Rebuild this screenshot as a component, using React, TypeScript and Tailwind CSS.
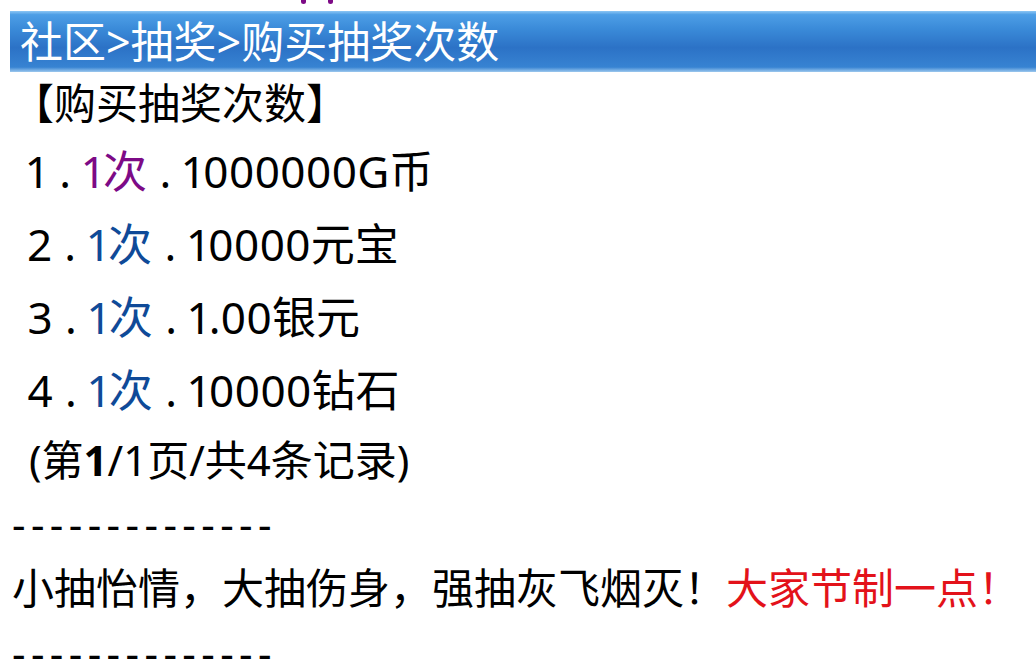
export default function App() {
  const items = [
    { n: '1', color: 'text-[#7d0a86]', prize: '1000000G币' },
    { n: '2', color: 'text-[#0f4a98]', prize: '10000元宝' },
    { n: '3', color: 'text-[#0f4a98]', prize: '1.00银元' },
    { n: '4', color: 'text-[#0f4a98]', prize: '10000钻石' },
  ]

  return (
    <div
      className="w-[1036px] h-[660px] overflow-hidden bg-white text-black text-[42px] leading-none"
      style={{ fontFamily: '"Noto Sans", "Noto Sans CJK SC", sans-serif' }}
    >
      {/* bottoms of the cut-off line above the header */}
      <div className="h-[11px] relative">
        <span className="absolute left-[301px] top-0 w-[5px] h-[4px] rounded-b-full bg-[#7d0a86]" />
        <span className="absolute left-[328px] top-0 w-[5px] h-[4px] rounded-b-full bg-[#7d0a86]" />
      </div>

      <div className="ml-[10px] h-[61px] flex items-center pl-[10px] text-[43px] text-white bg-[linear-gradient(to_bottom,#8cc6f4_0%,#4d9ee6_6%,#3a8ad8_30%,#2c72c6_60%,#3783d2_92%,#9cc8ee_100%)]">
        社区&gt;抽奖&gt;购买抽奖次数
      </div>

      <div className="pl-[12px]">
        <div className="h-[62px] flex items-center">【购买抽奖次数】</div>

        {items.map((it) => (
          <div
            key={it.n}
            className="h-[73px] flex items-center whitespace-pre pl-[3px] text-[44px] [word-spacing:1px] [font-variant-numeric:proportional-nums]"
          >
            {` ${it.n} . `}
            <span className={it.color}>1次</span>
            {` . ${it.prize}`}
          </div>
        ))}

        <div className="h-[68px] flex items-center whitespace-pre pl-[6px]">
          {' (第'}
          <b>1</b>
          {'/1页/共4条记录)'}
        </div>

        <div className="h-[60px] flex items-center tracking-[5.4px]">--------------</div>

        <div className="h-[68px] flex items-center">
          小抽怡情，大抽伤身，强抽灰飞烟灭！
          <span className="text-[#e3121a]">大家节制一点！</span>
        </div>

        <div className="h-[62px] flex items-center tracking-[5.4px]">--------------</div>
      </div>
    </div>
  )
}
